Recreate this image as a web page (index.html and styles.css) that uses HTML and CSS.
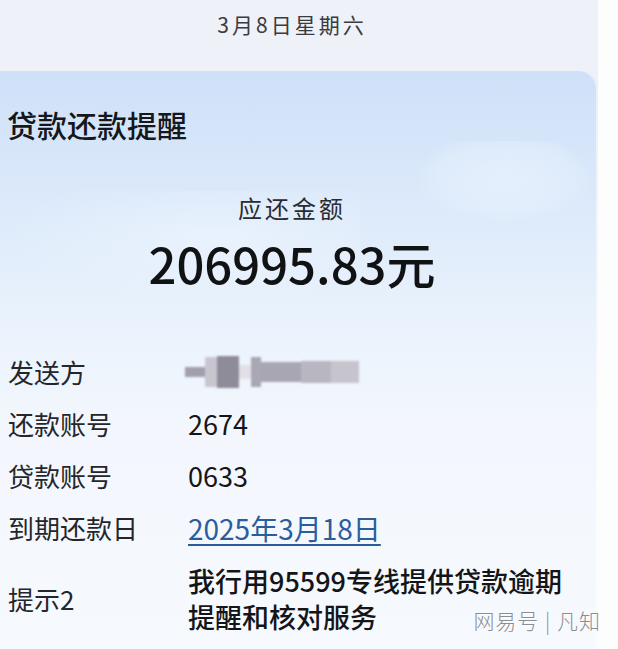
FILE: index.html
```html
<!DOCTYPE html>
<html lang="zh-CN">
<head>
<meta charset="utf-8">
<title>贷款还款提醒</title>
<link rel="stylesheet" href="styles.css">
</head>
<body>
<div class="screen">
  <div class="date-bar">3月8日星期六</div>
  <div class="card">
    <div class="cloud cloud-a"></div>
    <div class="cloud cloud-b"></div>
    <h1 class="title">贷款还款提醒</h1>
    <div class="amount-label">应还金额</div>
    <div class="amount">206995.83元</div>
    <div class="rows">
      <div class="row">
        <div class="label">发送方</div>
        <div class="value">
          <div class="mosaic">
            <span class="m m1"></span><span class="m m2"></span><span class="m m3"></span><span class="m m4"></span><span class="m m5"></span><span class="m m6"></span><span class="m m7"></span><span class="m m8"></span>
          </div>
        </div>
      </div>
      <div class="row">
        <div class="label">还款账号</div>
        <div class="value">2674</div>
      </div>
      <div class="row">
        <div class="label">贷款账号</div>
        <div class="value">0633</div>
      </div>
      <div class="row">
        <div class="label">到期还款日</div>
        <div class="value link">2025年3月18日</div>
      </div>
      <div class="row row-multi">
        <div class="label">提示2</div>
        <div class="value hint">我行用95599专线提供贷款逾期<br>提醒和核对服务</div>
      </div>
    </div>
  </div>
  <div class="watermark">网易号 | 凡知</div>
</div>
</body>
</html>
```

FILE: styles.css
```css
html, body {
  margin: 0;
  padding: 0;
  background: #fdfdfe;
}

body {
  width: 618px;
  height: 649px;
  overflow: hidden;
  font-family: "Noto Sans CJK SC", "Noto Sans", sans-serif;
  color: #1c1c1e;
}

.screen {
  position: relative;
  width: 598px;
  height: 649px;
  background: #eef1f7;
}

.date-bar {
  height: 71px;
  box-sizing: border-box;
  padding-top: 8px;
  padding-right: 14px;
  line-height: 32px;
  text-align: center;
  font-size: 21px;
  letter-spacing: 3px;
  color: #3a3b40;
}

.card {
  position: relative;
  height: 578px;
  box-sizing: border-box;
  border-radius: 0 18px 0 0;
  overflow: hidden;
  background: linear-gradient(180deg, #cfe1f8 0%, #dbe9fa 22%, #e9f2fc 42%, #f3f7fd 62%, #f6f9fd 100%);
  box-shadow: inset -2px 0 0 rgba(255,255,255,0.5);
}

.cloud {
  position: absolute;
  pointer-events: none;
}

.cloud-a {
  left: 420px;
  top: 70px;
  width: 170px;
  height: 80px;
  border-radius: 40px 50px 30px 30px;
  background: radial-gradient(ellipse at 50% 45%, rgba(238,246,255,0.55) 0%, rgba(235,244,254,0.35) 55%, rgba(235,244,254,0) 75%);
}

.cloud-b {
  left: 0;
  top: 120px;
  width: 360px;
  height: 110px;
  background: radial-gradient(ellipse at 60% 40%, rgba(242,248,255,0.5) 0%, rgba(242,248,255,0) 70%);
}

.title {
  position: relative;
  margin: 0;
  padding-top: 33px;
  padding-left: 7px;
  font-size: 30px;
  line-height: 40px;
  font-weight: 500;
  color: #16171a;
}

.amount-label {
  position: relative;
  margin-top: 48px;
  padding-right: 14px;
  text-align: center;
  font-size: 24px;
  line-height: 32px;
  letter-spacing: 3px;
  color: #2a2b30;
}

.amount {
  position: relative;
  margin-top: 12px;
  padding-right: 14px;
  text-align: center;
  font-size: 49px;
  line-height: 54px;
  font-weight: 500;
  color: #111214;
}

.rows {
  position: relative;
  margin-top: 56px;
  padding-left: 8px;
}

.row {
  display: flex;
  align-items: center;
  height: 52px;
}

.row-multi {
  height: auto;
  padding-top: 9px;
}

.label {
  width: 180px;
  flex: none;
  font-size: 26px;
  line-height: 36px;
  color: #25262a;
}

.value {
  font-size: 27px;
  line-height: 36px;
  color: #141518;
}

.link {
  font-size: 28px;
  color: #2a5d9c;
  text-decoration: underline;
  text-decoration-thickness: 2px;
  text-underline-offset: 4px;
}

.hint {
  font-weight: 500;
  line-height: 36px;
}

.mosaic {
  display: flex;
  align-items: center;
  height: 34px;
  margin-left: -3px;
  filter: blur(1.2px);
}

.m {
  display: block;
  height: 22px;
}

.m1 { width: 20px; height: 10px; background: #a19fab; }
.m2 { width: 12px; height: 30px; background: #c9c6d0; }
.m3 { width: 22px; height: 32px; background: #8e8c98; }
.m4 { width: 12px; height: 14px; background: #e2e0e6; }
.m5 { width: 10px; height: 30px; background: #a9a7b2; }
.m6 { width: 40px; height: 20px; background: #a8a6b2; }
.m7 { width: 30px; height: 22px; background: #b8b6c0; }
.m8 { width: 28px; height: 22px; background: #c6c4cd; }

.watermark {
  position: absolute;
  right: -3px;
  bottom: 15px;
  font-size: 21px;
  line-height: 28px;
  letter-spacing: 1px;
  color: #8c8d92;
  font-weight: 300;
  text-shadow: 1px 1px 0 rgba(255,255,255,0.9);
}
```
